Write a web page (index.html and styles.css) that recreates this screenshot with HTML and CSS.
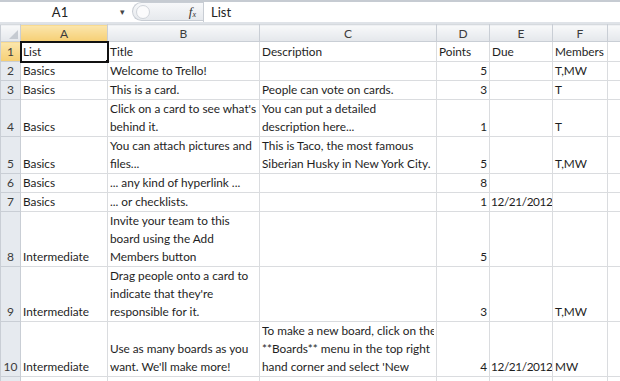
FILE: index.html
```html
<!DOCTYPE html>
<html lang="en">
<head>
  <meta charset="UTF-8" />
  <title>Trello export - Excel</title>
  <link rel="stylesheet" href="styles.css">
</head>
<body>
  <!-- Formula bar -->
  <div class="formula-bar">
    <div class="name-box">A1</div>
    <div class="name-arrow">&#9662;</div>
    <div class="fx-area">
      <span class="handle"></span>
      <span class="fx">f<sub>x</sub></span>
    </div>
    <div class="formula-input">List</div>
  </div>
  <div class="bar-gap"></div>

  <!-- Sheet -->
  <table class="sheet">
    <colgroup>
      <col class="c-head">
      <col class="c-a">
      <col class="c-b">
      <col class="c-c">
      <col class="c-d">
      <col class="c-e">
      <col class="c-f">
      <col class="c-g">
    </colgroup>
    <thead>
      <tr class="col-heads">
        <th class="corner"><span class="corner-tri"></span></th>
        <th class="active">A</th>
        <th>B</th>
        <th>C</th>
        <th>D</th>
        <th>E</th>
        <th>F</th>
        <th></th>
      </tr>
    </thead>
    <tbody>
      <tr class="h-r1">
        <th class="row-num active">1</th>
        <td class="selected">List<span class="fill-handle"></span></td>
        <td>Title</td>
        <td>Description</td>
        <td>Points</td>
        <td>Due</td>
        <td>Members</td>
        <td></td>
      </tr>
      <tr class="h-r2">
        <th class="row-num">2</th>
        <td>Basics</td>
        <td>Welcome to Trello!</td>
        <td></td>
        <td class="num">5</td>
        <td></td>
        <td>T,MW</td>
        <td></td>
      </tr>
      <tr class="h-r3">
        <th class="row-num">3</th>
        <td>Basics</td>
        <td>This is a card.</td>
        <td>People can vote on cards.</td>
        <td class="num">3</td>
        <td></td>
        <td>T</td>
        <td></td>
      </tr>
      <tr class="h-2l">
        <th class="row-num">4</th>
        <td>Basics</td>
        <td>Click on a card to see what's<br>behind it.</td>
        <td>You can put a detailed<br>description here...</td>
        <td class="num">1</td>
        <td></td>
        <td>T</td>
        <td></td>
      </tr>
      <tr class="h-2l">
        <th class="row-num">5</th>
        <td>Basics</td>
        <td>You can attach pictures and<br>files...</td>
        <td>This is Taco, the most famous<br>Siberian Husky in New York City.</td>
        <td class="num">5</td>
        <td></td>
        <td>T,MW</td>
        <td></td>
      </tr>
      <tr class="h-r6">
        <th class="row-num">6</th>
        <td>Basics</td>
        <td>... any kind of hyperlink ...</td>
        <td></td>
        <td class="num">8</td>
        <td></td>
        <td></td>
        <td></td>
      </tr>
      <tr class="h-r7">
        <th class="row-num">7</th>
        <td>Basics</td>
        <td>... or checklists.</td>
        <td></td>
        <td class="num">1</td>
        <td class="num date">12/21/2012</td>
        <td></td>
        <td></td>
      </tr>
      <tr class="h-3l">
        <th class="row-num">8</th>
        <td>Intermediate</td>
        <td>Invite your team to this<br>board using the Add<br>Members button</td>
        <td></td>
        <td class="num">5</td>
        <td></td>
        <td></td>
        <td></td>
      </tr>
      <tr class="h-3l">
        <th class="row-num">9</th>
        <td>Intermediate</td>
        <td>Drag people onto a card to<br>indicate that they're<br>responsible for it.</td>
        <td></td>
        <td class="num">3</td>
        <td></td>
        <td>T,MW</td>
        <td></td>
      </tr>
      <tr class="h-3l">
        <th class="row-num">10</th>
        <td>Intermediate</td>
        <td>Use as many boards as you<br>want. We'll make more!</td>
        <td class="clip"><div class="clip-box">To make a new board, click on the<br>**Boards** menu in the top right<br>hand corner and select 'New<br>Board'.</div></td>
        <td class="num">4</td>
        <td class="num date">12/21/2012</td>
        <td>MW</td>
        <td></td>
      </tr>
      <tr class="h-r2">
        <th class="row-num">11</th>
        <td></td>
        <td></td>
        <td></td>
        <td></td>
        <td></td>
        <td></td>
        <td></td>
      </tr>
    </tbody>
  </table>
</body>
</html>
```

FILE: styles.css
```css
* {
  margin: 0;
  padding: 0;
  box-sizing: border-box;
}
html, body {
  width: 620px;
  height: 381px;
  overflow: hidden;
  background: #fff;
  font-family: 'Lato', 'Liberation Sans', sans-serif;
  color: #1e1e1e;
}

/* formula bar */
.formula-bar {
  height: 22px;
  display: flex;
  align-items: stretch;
  border-top: 2px solid #c6cbd2;
  background: #fff;
  font-size: 13px;
}
.name-box {
  width: 120px;
  text-align: center;
  line-height: 20px;
  color: #222;
}
.name-arrow {
  width: 12px;
  font-size: 9px;
  line-height: 20px;
  color: #444;
}
.fx-area {
  width: 71px;
  position: relative;
  background: linear-gradient(#f7f8fa, #e6e9ed);
  border: 1px solid #c8cdd4;
  border-right: none;
  border-radius: 10px 0 0 10px;
  margin: 0 0 1px;
}
.handle {
  position: absolute;
  left: 3px;
  top: 2px;
  width: 14px;
  height: 14px;
  border-radius: 50%;
  border: 1px solid #d0d4da;
  background: #fbfbfc;
}
.fx {
  position: absolute;
  right: 7px;
  top: 1px;
  font-family: 'Liberation Serif', serif;
  font-style: italic;
  font-size: 13px;
  color: #333;
}
.fx sub {
  font-size: 8px;
  vertical-align: -1px;
}
.formula-input {
  flex: 1;
  padding-left: 7px;
  line-height: 20px;
  border-left: 1px solid #c8cdd4;
  color: #222;
}
.bar-gap {
  height: 2px;
  background: #dfe3e8;
}

/* sheet */
.sheet {
  table-layout: fixed;
  border-collapse: collapse;
  width: 640px;
  font-size: 11.8px;
}
.c-head { width: 20px; }
.c-a { width: 87px; }
.c-b { width: 152px; }
.c-c { width: 177px; }
.c-d { width: 53px; }
.c-e { width: 63px; }
.c-f { width: 55px; }
.c-g { width: 33px; }

.col-heads th {
  height: 17px;
  font-weight: normal;
  font-size: 12px;
  color: #3c3c3c;
  background: linear-gradient(#f8f9fa, #e4e7eb);
  border: 1px solid #c9ced5;
  border-top: 1px solid #d6dade;
  line-height: 15px;
}
.col-heads th.active {
  background: linear-gradient(#fbe6ad, #f6cf74);
  border-bottom-color: #f0b94c;
}
.corner {
  position: relative;
}
.corner-tri {
  position: absolute;
  right: 2px;
  bottom: 2px;
  width: 0;
  height: 0;
  border-left: 9px solid transparent;
  border-bottom: 9px solid #c5cad1;
}

.row-num {
  font-weight: normal;
  font-size: 12px;
  color: #3c3c3c;
  text-align: center;
  vertical-align: bottom;
  background: #e6eaef;
  border: 1px solid #c9ced5;
  border-top-color: #d3d8de;
  line-height: 18px;
}
.row-num.active {
  background: linear-gradient(#fbe6ad, #f6cf74);
}

td {
  border: 1px solid #dadcdf;
  padding: 0 2px;
  vertical-align: bottom;
  white-space: nowrap;
  overflow: hidden;
  line-height: 18px;
}
td.num {
  text-align: right;
}
td.date {
  padding: 0 1px;
  letter-spacing: -0.4px;
}
td.selected {
  position: relative;
  outline: 2px solid #111;
  outline-offset: -1px;
}
.fill-handle {
  position: absolute;
  right: -3px;
  bottom: -3px;
  width: 5px;
  height: 5px;
  background: #111;
  border: 1px solid #fff;
}
td.clip {
  vertical-align: top;
}
.clip-box {
  height: 54px;
  overflow: hidden;
}

.h-r1 { height: 20px; }
.h-r2 { height: 19px; }
.h-r3 { height: 18px; }
.h-r6 { height: 19px; }
.h-r7 { height: 17px; }
.h-2l { height: 37px; }
.h-3l { height: 55px; }
```
